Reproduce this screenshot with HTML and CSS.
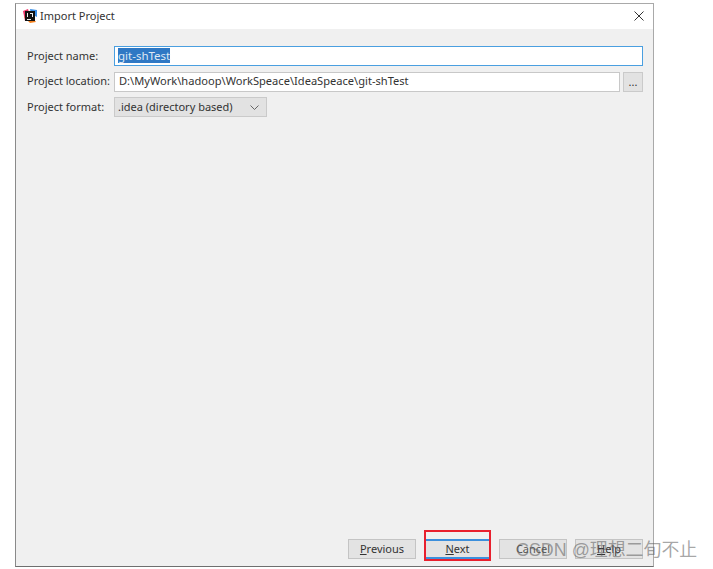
FILE: index.html
```
<!DOCTYPE html>
<html lang="en">
<head>
<meta charset="utf-8">
<title>Import Project</title>
<link rel="stylesheet" href="styles.css">
</head>
<body>
<div class="window">
  <header class="titlebar">
    <svg class="logo" width="16" height="16" viewBox="0 0 16 16">
      <path d="M1 3 L6 1 L8 8 L3 13 Z" fill="#f0356b"/>
      <path d="M8 1 L15 2 L15 9 L9 6 Z" fill="#3a8ee6"/>
      <path d="M2 9 L8 15 L14 14 L9 8 Z" fill="#f58220"/>
      <rect x="3" y="3" width="10" height="10" fill="#111"/>
      <rect x="5" y="11" width="4" height="1" fill="#eee"/>
      <rect x="5" y="5" width="1" height="4" fill="#eee"/>
      <rect x="8" y="5" width="3" height="1" fill="#eee"/>
      <rect x="10" y="5" width="1" height="4" fill="#eee"/>
    </svg>
    <span class="title">Import Project</span>
    <svg class="close" width="10" height="10" viewBox="0 0 10 10">
      <path d="M0.5 0.5 L9.5 9.5 M9.5 0.5 L0.5 9.5" stroke="#333" stroke-width="1" fill="none"/>
    </svg>
  </header>
  <main class="content">
    <div class="form">
      <div class="row">
        <label class="label">Project name:</label>
        <div class="field field-focus"><span class="selected">git-shTest</span></div>
      </div>
      <div class="row">
        <label class="label">Project location:</label>
        <div class="field">D:\MyWork\hadoop\WorkSpeace\IdeaSpeace\git-shTest</div>
        <button class="browse">...</button>
      </div>
      <div class="row">
        <label class="label">Project format:</label>
        <div class="select">
          <span>.idea (directory based)</span>
          <svg width="9" height="5" viewBox="0 0 9 5"><path d="M0.5 0.5 L4.5 4.5 L8.5 0.5" stroke="#666" fill="none"/></svg>
        </div>
      </div>
    </div>
    <footer class="actions">
      <button class="btn"><u>P</u>revious</button>
      <button class="btn btn-primary"><u>N</u>ext</button>
      <button class="btn btn-cancel">Cancel</button>
      <button class="btn btn-help"><u>H</u>elp</button>
    </footer>
  </main>
</div>
<div class="highlight"></div>
<div class="watermark">CSDN @理想二旬不止</div>
</body>
</html>
```
FILE: styles.css
```
* { box-sizing: border-box; }
html, body { margin: 0; padding: 0; }
body {
  width: 713px;
  height: 569px;
  background: #fff;
  font-family: "Noto Sans", "Open Sans", sans-serif;
  overflow: hidden;
  position: relative;
  padding: 3px 0 0 15px;
}
.window {
  width: 639px;
  height: 564px;
  border: 1px solid #a9a9a9;
  border-left-color: #8a8a8a;
  border-bottom: 1px solid #6e6e6e;
  display: flex;
  flex-direction: column;
  background: #f0f0f0;
}
.titlebar {
  height: 25px;
  flex: none;
  background: #fff;
  display: flex;
  align-items: center;
  padding: 0 9px 2px 6px;
  gap: 2px;
}
.logo { flex: none; }
.title { font-size: 11px; color: #333; flex: 1; }
.close { flex: none; }
.content {
  flex: 1;
  display: flex;
  flex-direction: column;
  justify-content: space-between;
  padding: 17px 10px 7px 11px;
}
.form { display: flex; flex-direction: column; gap: 5.5px; }
.row { display: flex; align-items: center; gap: 3px; height: 20px; }
.label { width: 84px; flex: none; font-size: 11px; color: #333; white-space: nowrap; padding-bottom: 2px; }
.field {
  flex: 1;
  height: 20px;
  background: #fff;
  border: 1px solid #c8c8c8;
  font-size: 11.1px;
  color: #333;
  padding: 0 3px 2px 4px;
  display: flex;
  align-items: center;
  white-space: nowrap;
}
.field-focus { border: 1px solid #4a9fe0; padding-left: 3px; padding-bottom: 1px; }
.selected { background: #2f78c4; color: #dfe9f5; font-size: 11.5px; line-height: 15px; }
.browse {
  width: 20px;
  height: 20px;
  flex: none;
  background: #e2e2e2;
  border: 1px solid #cacaca;
  font: 11px "Noto Sans", sans-serif;
  color: #333;
  padding: 0;
}
.select {
  width: 153px;
  height: 20px;
  background: #e2e2e2;
  border: 1px solid #cacaca;
  font-size: 11px;
  color: #333;
  padding: 0 4px 2px 3px;
  display: flex;
  align-items: center;
  justify-content: space-between;
}
.select svg { margin-right: 3px; margin-top: 2px; }
.actions { display: flex; justify-content: flex-end; gap: 8px; }
.btn {
  width: 68px;
  height: 20px;
  background: #e3e3e3;
  border: 1px solid #c4c4c4;
  font: 11px "Noto Sans", sans-serif;
  color: #333;
  padding: 0 0 2px;
}
.btn-primary { width: 67px; border: 2px solid #3c8fdc; }
.btn-cancel { color: #555; }
.highlight {
  position: absolute;
  left: 424px;
  top: 530px;
  width: 67px;
  height: 31px;
  border: 2px solid #e8202e;
}
.watermark {
  position: absolute;
  left: 516px;
  top: 540px;
  font-family: "Liberation Sans", "Noto Sans CJK SC", sans-serif;
  font-size: 17.9px;
  line-height: 20px;
  color: rgba(90, 90, 90, 0.55);
  white-space: nowrap;
}
```
